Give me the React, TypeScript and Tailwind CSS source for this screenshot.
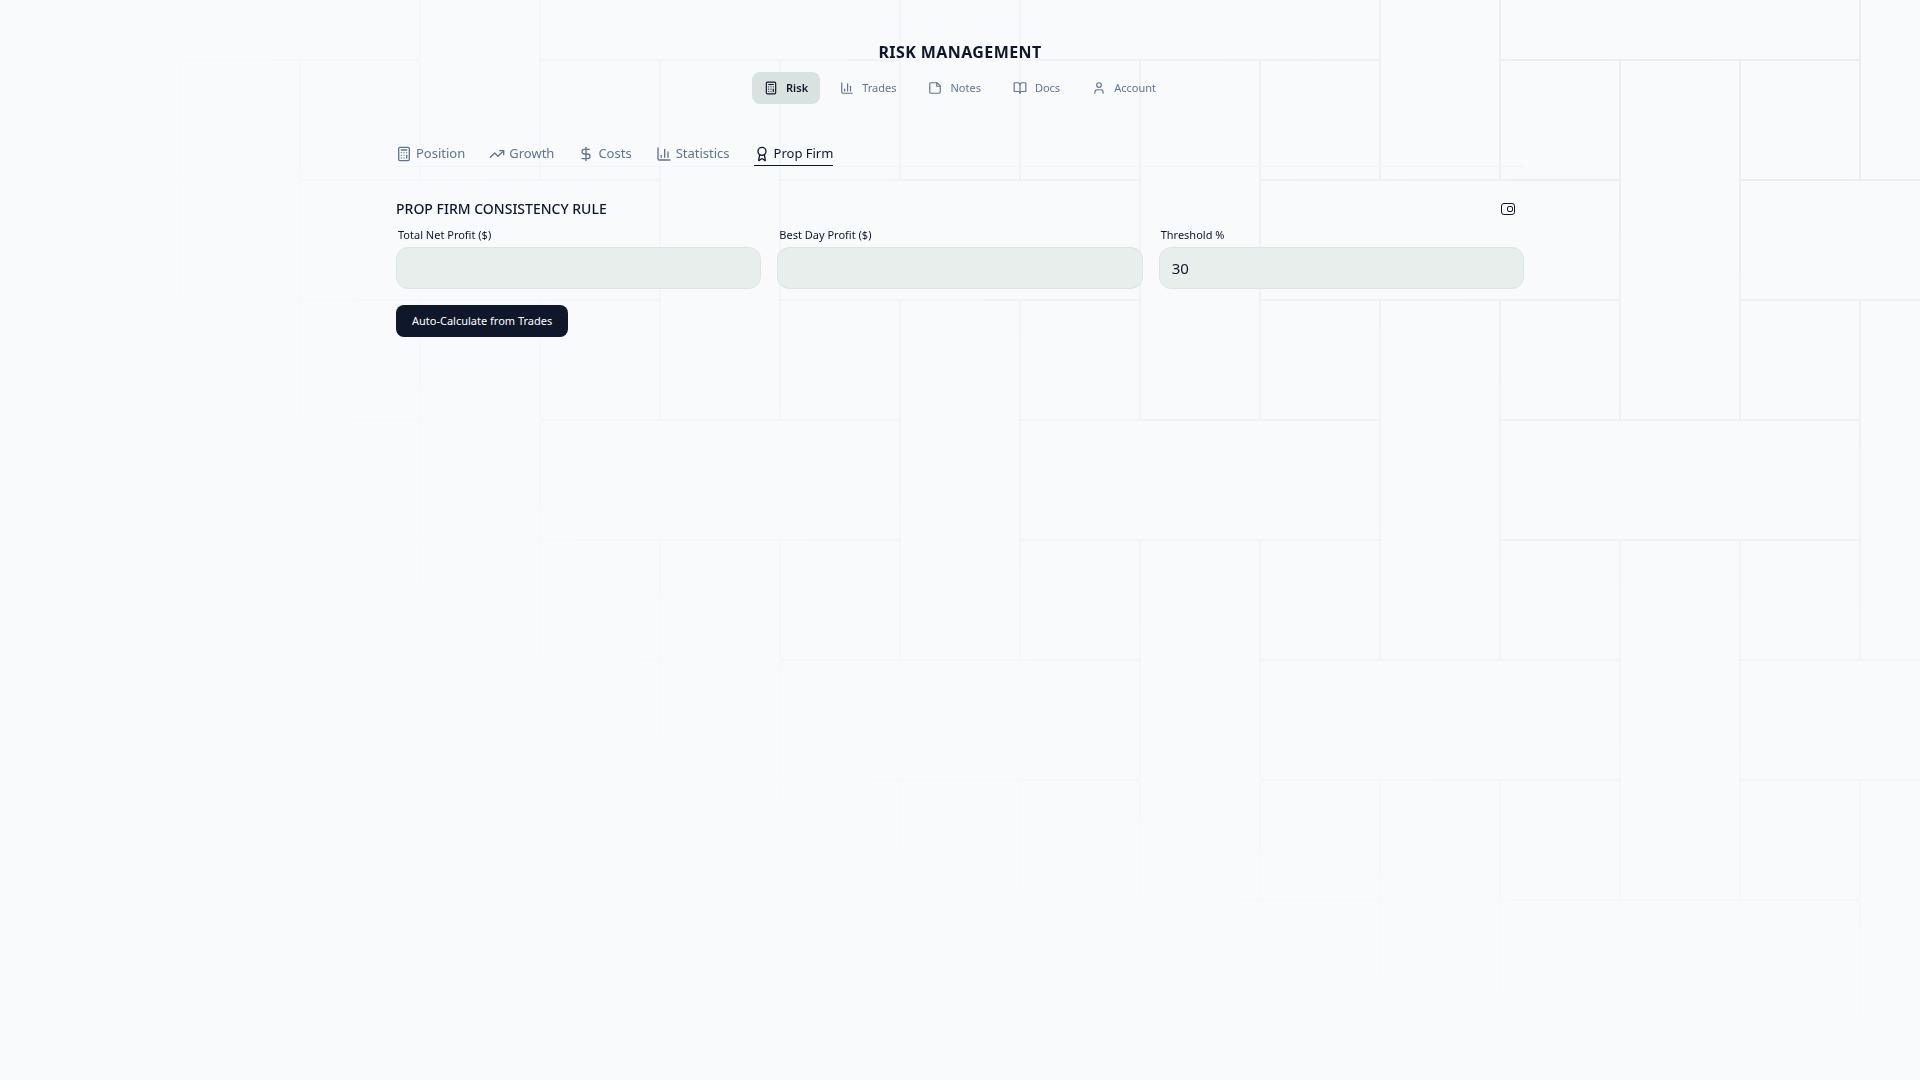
import { useState } from "react";
import {
  Award,
  BookOpen,
  Calculator,
  DollarSign,
  TrendingUp,
  User,
} from "lucide-react";

interface IconProps {
  size?: number;
}

const BarsIcon = ({ size = 16 }: IconProps) => (
  <svg width={size} height={size} viewBox="0 0 24 24" fill="none" stroke="currentColor" strokeWidth={2} strokeLinecap="round" strokeLinejoin="round">
    <path d="M3 3v16a2 2 0 0 0 2 2h16" />
    <path d="M8 17v-3" />
    <path d="M13 17V5" />
    <path d="M18 17V9" />
  </svg>
);

const NoteIcon = ({ size = 16 }: IconProps) => (
  <svg width={size} height={size} viewBox="0 0 24 24" fill="none" stroke="currentColor" strokeWidth={2} strokeLinecap="round" strokeLinejoin="round">
    <path d="M15.5 3H5a2 2 0 0 0-2 2v14a2 2 0 0 0 2 2h14a2 2 0 0 0 2-2V8.500Z" />
    <path d="M15 3v6h6" />
  </svg>
);

const SnapshotIcon = () => (
  <svg width={16} height={16} viewBox="0 0 16 16" fill="none" stroke="currentColor" strokeWidth={1}>
    <rect x="1.500" y="2.500" width="13" height="11" rx="2.500" />
    <rect x="7.500" y="5.500" width="5" height="5" rx="1.500" />
  </svg>
);

const pages = [
  { label: "Risk", icon: Calculator },
  { label: "Trades", icon: BarsIcon },
  { label: "Notes", icon: NoteIcon },
  { label: "Docs", icon: BookOpen },
  { label: "Account", icon: User },
];

const tabs = [
  { label: "Position", icon: Calculator },
  { label: "Growth", icon: TrendingUp },
  { label: "Costs", icon: DollarSign },
  { label: "Statistics", icon: BarsIcon },
  { label: "Prop Firm", icon: Award },
];

const fields = [
  { id: "total-net-profit", label: "Total Net Profit ($)", value: "" },
  { id: "best-day-profit", label: "Best Day Profit ($)", value: "" },
  { id: "threshold", label: "Threshold %", value: "30" },
];

// Woven line pattern, fades away from the top right corner
const Backdrop = () => (
  <svg
    aria-hidden="true"
    className="pointer-events-none fixed inset-0 h-full w-full [mask-image:radial-gradient(ellipse_at_top_right,black,transparent_69%)]">
    <defs>
      <pattern id="weave" width="480" height="480" patternUnits="userSpaceOnUse">
        <path
          d="M60 0V180M60 300V480M420 0V180M420 300V480M180 60V420M300 60V420M60 60H420M60 420H420M0 180H180M300 180H480M0 300H180M300 300H480"
          fill="none"
          stroke="#eaebed"
          strokeWidth="2"
        />
      </pattern>
    </defs>
    <rect width="100%" height="100%" fill="url(#weave)" />
  </svg>
);

const App = () => {
  const [page, setPage] = useState("Risk");
  const [tab, setTab] = useState("Prop Firm");
  const [values, setValues] = useState(fields.map((field) => field.value));

  return (
    <div className="min-h-screen bg-slate-50 font-['Noto_Sans',sans-serif] text-slate-900">
      <Backdrop />

      <div className="relative mx-auto max-w-[1128px] pt-10">
        <header className="flex flex-col items-center gap-2">
          <h1 className="text-base leading-6 font-bold tracking-wide">RISK MANAGEMENT</h1>
          <nav className="flex gap-2">
            {pages.map(({ label, icon: Icon }) => (
              <button
                key={label}
                onClick={() => setPage(label)}
                className={`flex h-8 cursor-pointer items-center gap-2 rounded-lg px-3 text-[11px] ${
                  page === label
                    ? "bg-[#d8e2de] font-semibold text-slate-900"
                    : "text-slate-500"
                }`}>
                <Icon size={14} />
                {label}
              </button>
            ))}
          </nav>
        </header>

        <nav className="mt-[38px] flex gap-6 border-b border-slate-100">
          {tabs.map(({ label, icon: Icon }) => (
            <button
              key={label}
              onClick={() => setTab(label)}
              className={`flex h-6 cursor-pointer items-center gap-1 border-b text-[13px] ${
                tab === label
                  ? "border-slate-900 text-slate-900"
                  : "border-transparent text-slate-500"
              }`}>
              <Icon size={16} />
              {label}
            </button>
          ))}
        </nav>

        <main className="pt-8">
          <div className="flex items-center justify-between pr-2">
            <h2 className="text-sm leading-5 font-medium">PROP FIRM CONSISTENCY RULE</h2>
            <button aria-label="Save snapshot" className="cursor-pointer">
              <SnapshotIcon />
            </button>
          </div>

          <div className="mt-2 grid grid-cols-3 gap-4">
            {fields.map((field, index) => (
              <div key={field.id} className="flex flex-col gap-1">
                <label htmlFor={field.id} className="px-[2px] text-[11px] leading-4">
                  {field.label}
                </label>
                <input
                  id={field.id}
                  value={values[index]}
                  onChange={(e) =>
                    setValues(values.map((v, i) => (i === index ? e.target.value : v)))
                  }
                  className="h-[42px] w-full rounded-xl border border-[#dbe5e1] bg-[#e7eeeb] px-3 text-[15px] outline-none"
                />
              </div>
            ))}
          </div>

          <button className="mt-4 h-8 cursor-pointer rounded-lg bg-slate-900 px-4 text-[11px] text-white">
            Auto-Calculate from Trades
          </button>
        </main>
      </div>
    </div>
  );
};

export default App;
